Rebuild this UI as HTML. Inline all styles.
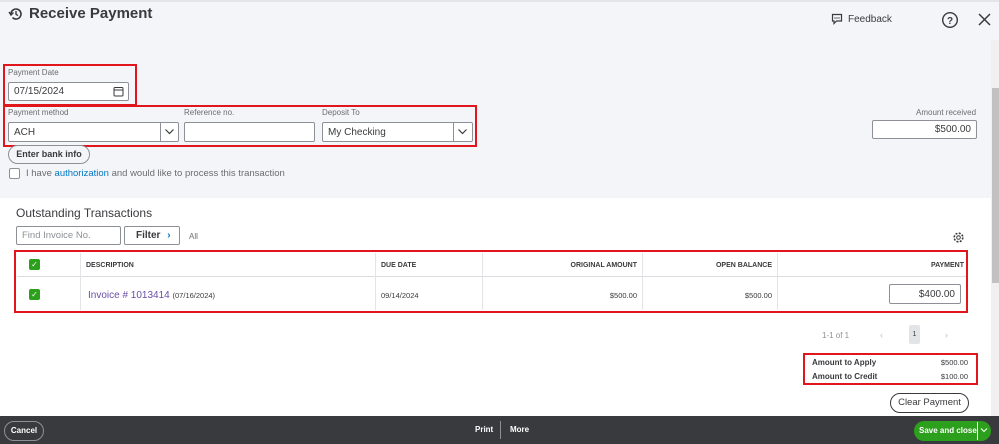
<!DOCTYPE html>
<html><head><style>
*{box-sizing:border-box;margin:0;padding:0}
body{width:999px;height:444px;overflow:hidden;position:relative;font-family:"Liberation Sans",sans-serif;color:#393a3d;background:#fff}
.a{position:absolute}
.top{left:0;top:0;width:999px;height:198px;background:#f4f5f8;border-top:2px solid #e4e5e8}
.lbl{font-size:8px;color:#6b6c72}
.inp{background:#fff;border:1px solid #8d9096;border-radius:2px;font-size:10px;padding-left:5px;display:flex;align-items:center}
.red{border:2.5px solid #e0161c}
.th{font-size:7px;font-weight:bold;color:#393a3d}
.td{font-size:7.5px;color:#393a3d}
.chk{width:11px;height:11px;background:#2ca01c;border-radius:2px;color:#fff;font-size:8px;line-height:11px;text-align:center}
.vl{width:1px;background:#e3e4e7}
</style></head><body>
<div class="a top"></div>
<svg class="a" style="left:8px;top:6px" width="16" height="16" viewBox="0 0 16 16"><path d="M3 8a5 5 0 1 1 1.5 3.6" fill="none" stroke="#393a3d" stroke-width="1.6"/><path d="M1 6l2 3 2.5-2.5" fill="none" stroke="#393a3d" stroke-width="1.4"/><path d="M8 5v3.3l2 1.3" fill="none" stroke="#393a3d" stroke-width="1.4"/></svg>
<div class="a" style="left:29px;top:5px;font-size:15px;font-weight:bold;color:#393a3d">Receive Payment</div>
<svg class="a" style="left:831px;top:13px" width="12" height="12" viewBox="0 0 12 12"><path d="M1.5 1.5h9v6.5h-5l-2.5 2.5v-2.5h-1.5z" fill="none" stroke="#393a3d" stroke-width="1.2"/><circle cx="4" cy="5" r=".6"/><circle cx="6" cy="5" r=".6"/><circle cx="8" cy="5" r=".6"/></svg>
<div class="a" style="left:848px;top:14px;font-size:10px">Feedback</div>
<svg class="a" style="left:941px;top:11px" width="18" height="18" viewBox="0 0 18 18"><circle cx="9" cy="9" r="7.3" fill="none" stroke="#393a3d" stroke-width="1.4"/><text x="9" y="13" font-size="10" text-anchor="middle" font-family="Liberation Sans" font-weight="bold" fill="#393a3d">?</text></svg>
<svg class="a" style="left:978px;top:13px" width="13" height="13" viewBox="0 0 13 13"><path d="M1 1l11 11M12 1L1 12" stroke="#393a3d" stroke-width="1.5"/></svg>
<div class="a" style="left:991px;top:40px;width:8px;height:376px;background:#f0f0f0"></div>
<div class="a" style="left:992px;top:88px;width:7px;height:195px;background:#c1c1c1"></div>

<div class="a red" style="left:3px;top:64px;width:134px;height:42px"></div>
<div class="a lbl" style="left:8px;top:68px">Payment Date</div>
<div class="a inp" style="left:8px;top:82px;width:121px;height:19px">07/15/2024</div>
<svg class="a" style="left:113px;top:86px" width="11" height="11" viewBox="0 0 11 11"><rect x="1" y="1.5" width="9" height="8.5" rx="1" fill="none" stroke="#393a3d"/><path d="M1 4h9" stroke="#393a3d"/></svg>

<div class="a red" style="left:3px;top:105px;width:474px;height:42px"></div>
<div class="a lbl" style="left:8px;top:108px">Payment method</div>
<div class="a inp" style="left:8px;top:122px;width:171px;height:20px">ACH</div>
<div class="a" style="left:160px;top:123px;width:1px;height:18px;background:#8d9096"></div>
<svg class="a" style="left:164px;top:127px" width="11" height="9" viewBox="0 0 11 9"><path d="M1.5 2.5l4 4 4-4" fill="none" stroke="#393a3d" stroke-width="1.2"/></svg>
<div class="a lbl" style="left:184px;top:108px">Reference no.</div>
<div class="a inp" style="left:184px;top:122px;width:131px;height:20px"></div>
<div class="a lbl" style="left:322px;top:108px">Deposit To</div>
<div class="a inp" style="left:322px;top:122px;width:151px;height:20px">My Checking</div>
<div class="a" style="left:453px;top:123px;width:1px;height:18px;background:#8d9096"></div>
<svg class="a" style="left:457px;top:127px" width="11" height="9" viewBox="0 0 11 9"><path d="M1.5 2.5l4 4 4-4" fill="none" stroke="#393a3d" stroke-width="1.2"/></svg>

<div class="a lbl" style="left:916px;top:108px">Amount received</div>
<div class="a inp" style="left:872px;top:120px;width:105px;height:19px;justify-content:flex-end;padding-right:5px">$500.00</div>

<div class="a" style="left:8px;top:145px;width:82px;height:19px;border:1px solid #8d9096;border-radius:10px;font-size:9px;font-weight:bold;text-align:center;line-height:17px;background:#f4f5f8">Enter bank info</div>
<div class="a" style="left:9px;top:168px;width:11px;height:11px;border:1px solid #8d9096;border-radius:2px;background:#fff"></div>
<div class="a" style="left:26px;top:168px;font-size:9.5px;color:#6b6c72">I have <span style="color:#0077c5">authorization</span> and would like to process this transaction</div>

<div class="a" style="left:16px;top:206px;font-size:12px">Outstanding Transactions</div>
<div class="a inp" style="left:16px;top:226px;width:105px;height:19px;color:#8d9096;font-size:9.5px">Find Invoice No.</div>
<div class="a" style="left:124px;top:226px;width:56px;height:19px;border:1px solid #8d9096;border-radius:2px;font-size:10px;font-weight:bold;line-height:17px;padding-left:11px;background:#fff">Filter <span style="color:#0077c5;margin-left:4px">&#8250;</span></div>
<div class="a" style="left:189px;top:232px;font-size:8px;color:#6b6c72">All</div>
<svg class="a" style="left:952px;top:231px" width="13" height="13" viewBox="0 0 13 13"><circle cx="6.5" cy="6.5" r="4.3" fill="none" stroke="#393a3d" stroke-width="1.6" stroke-dasharray="2 1.4"/><circle cx="6.5" cy="6.5" r="1.8" fill="none" stroke="#393a3d"/></svg>

<div class="a red" style="left:14px;top:250px;width:954px;height:63px"></div>
<div class="a" style="left:17px;top:276px;width:949px;height:1px;background:#dcdde0"></div>
<div class="a vl" style="left:80px;top:253px;height:57px"></div>
<div class="a vl" style="left:375px;top:253px;height:57px"></div>
<div class="a vl" style="left:482px;top:253px;height:57px"></div>
<div class="a vl" style="left:642px;top:253px;height:57px"></div>
<div class="a vl" style="left:777px;top:253px;height:57px"></div>
<div class="a chk" style="left:29px;top:259px">&#10003;</div>
<div class="a th" style="left:86px;top:262px">DESCRIPTION</div>
<div class="a th" style="left:381px;top:262px">DUE DATE</div>
<div class="a th" style="left:537px;top:262px;width:100px;text-align:right">ORIGINAL AMOUNT</div>
<div class="a th" style="left:672px;top:262px;width:100px;text-align:right">OPEN BALANCE</div>
<div class="a th" style="left:864px;top:262px;width:100px;text-align:right">PAYMENT</div>
<div class="a chk" style="left:29px;top:289px">&#10003;</div>
<div class="a" style="left:88px;top:290px;font-size:10px;color:#6b4ea8">Invoice # 1013414 <span style="font-size:7.5px;color:#393a3d">(07/16/2024)</span></div>
<div class="a td" style="left:381px;top:291px">09/14/2024</div>
<div class="a td" style="left:537px;top:291px;width:100px;text-align:right">$500.00</div>
<div class="a td" style="left:672px;top:291px;width:100px;text-align:right">$500.00</div>
<div class="a inp" style="left:889px;top:284px;width:72px;height:20px;justify-content:flex-end;padding-right:5px">$400.00</div>

<div class="a" style="left:822px;top:331px;font-size:8px;color:#8d9096">1-1 of 1</div>
<div class="a" style="left:880px;top:330px;font-size:9px;color:#c0c0c0">&#8249;</div>
<div class="a" style="left:909px;top:325px;width:11px;height:19px;background:#e3e4e7;border-radius:2px;font-size:7px;text-align:center;line-height:19px">1</div>
<div class="a" style="left:945px;top:330px;font-size:9px;color:#c0c0c0">&#8250;</div>

<div class="a red" style="left:803px;top:353px;width:175px;height:32px"></div>
<div class="a" style="left:812px;top:358px;font-size:8px;font-weight:bold">Amount to Apply</div>
<div class="a" style="left:812px;top:372px;font-size:8px;font-weight:bold">Amount to Credit</div>
<div class="a td" style="left:900px;top:358px;width:68px;text-align:right">$500.00</div>
<div class="a td" style="left:900px;top:372px;width:68px;text-align:right">$100.00</div>
<div class="a" style="left:890px;top:393px;width:79px;height:20px;border:1px solid #393a3d;border-radius:10px;font-size:9.5px;text-align:center;line-height:18px">Clear Payment</div>

<div class="a" style="left:0;top:416px;width:999px;height:28px;background:#393a3d"></div>
<div class="a" style="left:4px;top:421px;width:40px;height:20px;border:1px solid #8d9096;border-radius:10px;font-size:8px;color:#fff;font-weight:bold;text-align:center;line-height:18px">Cancel</div>
<div class="a" style="left:475px;top:425px;font-size:8px;color:#fff;font-weight:bold">Print</div>
<div class="a" style="left:500px;top:421px;width:1px;height:18px;background:#8d9096"></div>
<div class="a" style="left:510px;top:425px;font-size:8px;color:#fff;font-weight:bold">More</div>
<div class="a" style="left:914px;top:421px;width:77px;height:20px;background:#2ca01c;border-radius:10px"></div>
<div class="a" style="left:919px;top:426px;font-size:8px;color:#fff;font-weight:bold">Save and close</div>
<div class="a" style="left:977px;top:422px;width:1px;height:18px;background:#fff"></div>
<svg class="a" style="left:980px;top:427px" width="8" height="6" viewBox="0 0 8 6"><path d="M1 1.5l3 3 3-3" fill="none" stroke="#fff" stroke-width="1"/></svg>
</body></html>
